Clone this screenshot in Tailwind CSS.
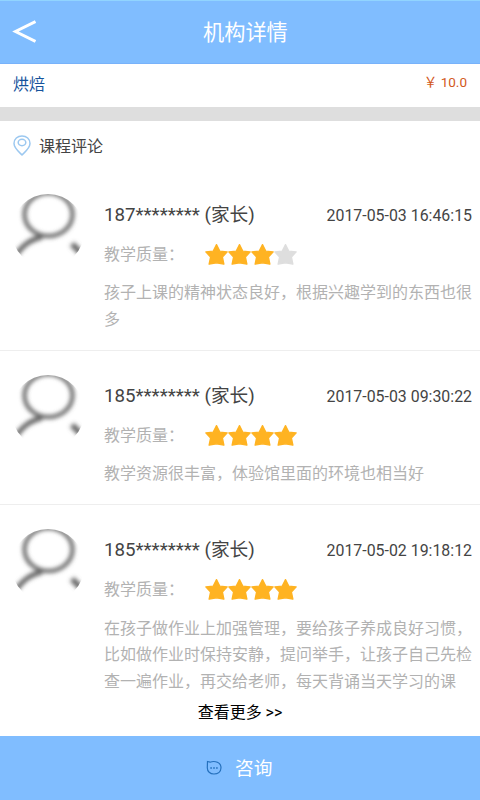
<!DOCTYPE html>
<html lang="zh-CN">
<head>
<meta charset="utf-8">
<title>机构详情</title>
<script src="https://cdn.jsdelivr.net/npm/@tailwindcss/browser@4"></script>
</head>
<body class="bg-white">
<svg width="0" height="0" class="absolute">
  <defs>
    <filter id="soft" x="-20%" y="-20%" width="140%" height="140%"><feGaussianBlur stdDeviation="1.9"/></filter>
    <clipPath id="round"><circle cx="37" cy="37.5" r="36.5"/></clipPath>
    <symbol id="avatar" viewBox="0 0 74 74">
      <g clip-path="url(#round)"><g filter="url(#soft)" fill="none" stroke="#666" stroke-width="4">
        <ellipse cx="37.5" cy="21.5" rx="24" ry="21.5"/>
        <path d="M2 66C9 56 16 47 31 44" stroke-width="5"/>
        <path d="M61 51L76 66" stroke-width="6"/>
      </g></g>
    </symbol>
    <symbol id="star" viewBox="0 0 23 24"><path d="M11.5 1.6L14.9 8.2L22.2 8.9L17.4 14L18.9 21.2L11.5 19.8L4.1 21.2L5.6 14L.8 8.9L8.1 8.2Z" fill="currentColor" stroke="currentColor" stroke-width="1.3" stroke-linejoin="round"/></symbol>
  </defs>
</svg>
<div class="flex h-[800px] w-[480px] flex-col overflow-hidden bg-white font-['Roboto','Noto_Sans_CJK_SC',sans-serif] text-[#444]">
  <header class="flex h-16 shrink-0 items-center border-t border-[#91d4ff] border-b border-b-[#78b2fa] bg-[#80bdff] pl-3">
    <svg class="h-6 w-6" viewBox="0 0 24 24" fill="none" stroke="#fff" stroke-width="3"><path d="M23.5 1.5L3.5 11.5L23.5 21.5"/></svg>
    <h1 class="ml-[167px] pt-0.5 text-[21.2px] leading-8 text-white">机构详情</h1>
  </header>
  <div class="flex h-[43px] shrink-0 justify-between pl-[13px] pr-[13px]">
    <span class="pt-[9px] text-base leading-6 text-[#16539c]">烘焙</span>
    <span class="pt-2 text-[13.5px] leading-5 text-[#d2591c]">￥ 10.0</span>
  </div>
  <div class="h-[14px] shrink-0 bg-[#dedede]"></div>
  <div class="flex h-[50px] shrink-0 items-center gap-2 pl-3">
    <svg class="h-[22px] w-5" viewBox="0 0 20 22" fill="none" stroke="#9cc8f0" stroke-width="1.5"><path d="M10 20C7 17 2 13 2 8.5C2 4 5.5 1 10 1S18 4 18 8.5C18 13 13 17 10 20Z"/><ellipse cx="10" cy="7.5" rx="3.8" ry="3.2"/></svg>
    <h2 class="-ml-px pt-0.5 text-base leading-6">课程评论</h2>
  </div>
  <main class="flex min-h-0 flex-1 flex-col overflow-hidden">
    <article class="flex h-[180px] shrink-0 border-b border-[#eee] pl-[11px] pr-2 pt-[22px]">
      <svg class="h-[74px] w-[74px] shrink-0"><use href="#avatar"/></svg>
      <div class="ml-[19px] flex-1 pt-2">
        <div class="flex h-7 items-center justify-between whitespace-nowrap"><span class="text-[18.7px]">187******** (家长)</span><time class="pt-0.5 text-[15.9px]">2017-05-03 16:46:15</time></div>
        <div class="mt-[14px] flex h-6 items-center text-base text-[#b2b2b2]"><span class="w-[101px]">教学质量：</span><span class="flex text-[#ffb322]"><svg class="h-6 w-[23px]"><use href="#star"/></svg><svg class="h-6 w-[23px]"><use href="#star"/></svg><svg class="h-6 w-[23px]"><use href="#star"/></svg><svg class="h-6 w-[23px] text-[#dedede]"><use href="#star"/></svg></span></div>
        <p class="mt-[13px] text-base leading-[26.6px] text-[#b2b2b2]">孩子上课的精神状态良好，根据兴趣学到的东西也很多</p>
      </div>
    </article>
    <article class="flex h-[154px] shrink-0 border-b border-[#eee] pl-[11px] pr-2 pt-[23px]">
      <svg class="h-[74px] w-[74px] shrink-0"><use href="#avatar"/></svg>
      <div class="ml-[19px] flex-1 pt-2">
        <div class="flex h-7 items-center justify-between whitespace-nowrap"><span class="text-[18.7px]">185******** (家长)</span><time class="pt-0.5 text-[15.9px]">2017-05-03 09:30:22</time></div>
        <div class="mt-[14px] flex h-6 items-center text-base text-[#b2b2b2]"><span class="w-[101px]">教学质量：</span><span class="flex text-[#ffb322]"><svg class="h-6 w-[23px]"><use href="#star"/></svg><svg class="h-6 w-[23px]"><use href="#star"/></svg><svg class="h-6 w-[23px]"><use href="#star"/></svg><svg class="h-6 w-[23px]"><use href="#star"/></svg></span></div>
        <p class="mt-[13px] text-base leading-[26.6px] text-[#b2b2b2]">教学资源很丰富，体验馆里面的环境也相当好</p>
      </div>
    </article>
    <article class="flex shrink-0 pl-[11px] pr-2 pt-[23px]">
      <svg class="h-[74px] w-[74px] shrink-0"><use href="#avatar"/></svg>
      <div class="ml-[19px] flex-1 pt-2">
        <div class="flex h-7 items-center justify-between whitespace-nowrap"><span class="text-[18.7px]">185******** (家长)</span><time class="pt-0.5 text-[15.9px]">2017-05-02 19:18:12</time></div>
        <div class="mt-[14px] flex h-6 items-center text-base text-[#b2b2b2]"><span class="w-[101px]">教学质量：</span><span class="flex text-[#ffb322]"><svg class="h-6 w-[23px]"><use href="#star"/></svg><svg class="h-6 w-[23px]"><use href="#star"/></svg><svg class="h-6 w-[23px]"><use href="#star"/></svg><svg class="h-6 w-[23px]"><use href="#star"/></svg></span></div>
        <p class="mt-[13.5px] text-base leading-[26.7px] text-[#b2b2b2]">在孩子做作业上加强管理，要给孩子养成良好习惯，比如做作业时保持安静，提问举手，让孩子自己先检查一遍作业，再交给老师，每天背诵当天学习的课</p>
      </div>
    </article>
  </main>
  <button class="h-[38px] shrink-0 bg-white pb-2 text-base leading-6 text-black">查看更多 &gt;&gt;</button>
  <footer class="flex h-16 shrink-0 items-center bg-[#80bdff] pl-[206px]">
    <svg class="h-4 w-4" viewBox="0 0 16 16" fill="none" stroke="#2470bd" stroke-width="1.2"><path d="M1.5 1.5L4 2.2C9 .3 15 2.5 15 7.8C15 12 11.5 14 8 14C4 14 1.3 11.5 1.3 7.8Z"/><path d="M4.3 8h1.6M7.2 8h1.6M10.1 8h1.6" stroke-width="1.6"/></svg>
    <span class="ml-[13px] pt-0.5 text-[18.7px] leading-7 text-white">咨询</span>
  </footer>
</div>
</body>
</html>
